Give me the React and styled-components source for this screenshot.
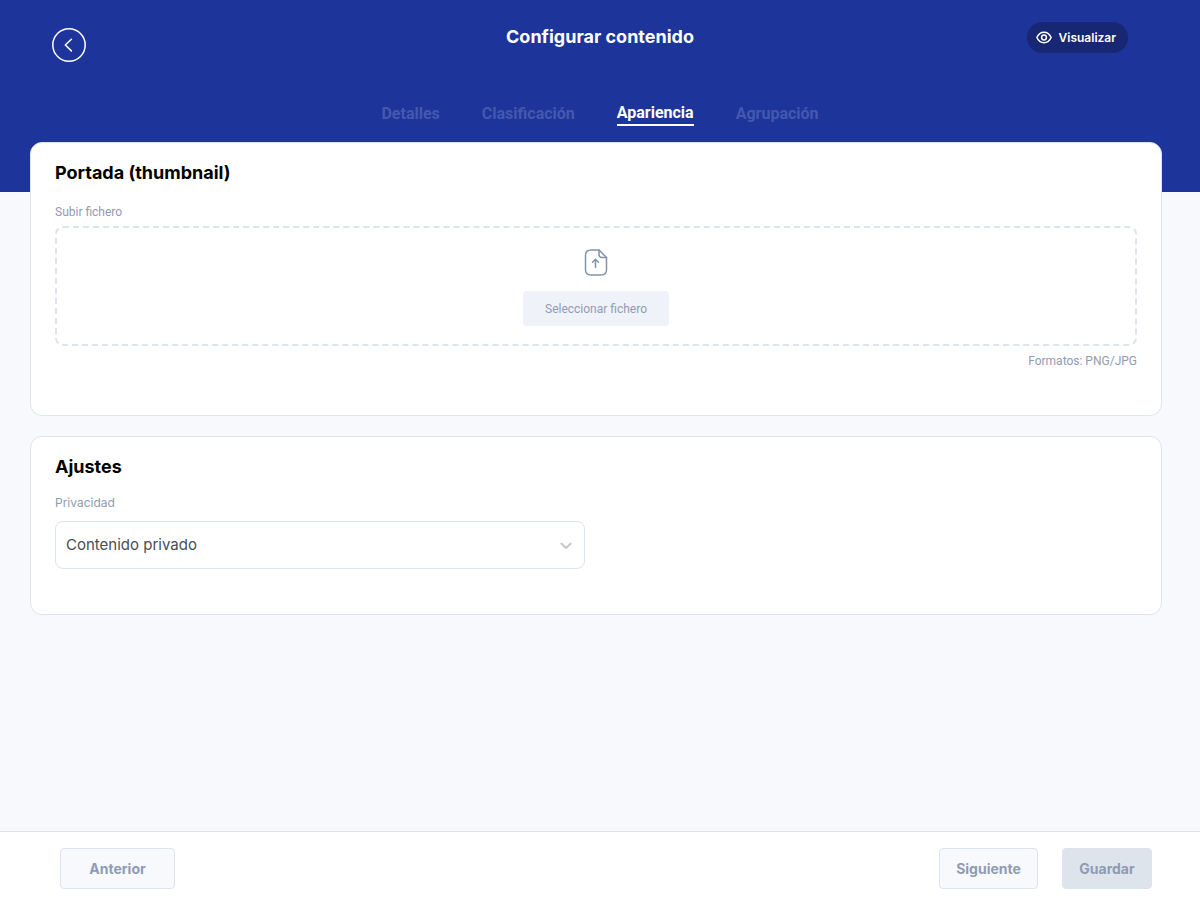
import React, { useState } from "react";
import styled, { createGlobalStyle } from "styled-components";

const TABS = ["Detalles", "Clasificación", "Apariencia", "Agrupación"];

const App = () => {
  const [tab, setTab] = useState("Apariencia");
  const [privacy, setPrivacy] = useState("private");

  return (
    <Page>
      <GlobalStyle />
      <Header>
        <TopBar>
          <BackButton type="button" aria-label="Volver">
            <svg width="34" height="34" viewBox="0 0 34 34" fill="none" stroke="#fff">
              <circle cx="17" cy="17" r="16.2" strokeWidth="1.5" />
              <path d="M19.4 11.3 13.3 17l6.1 5.9" strokeWidth="1.5" strokeLinecap="round" strokeLinejoin="round" />
            </svg>
          </BackButton>
          <Title>Configurar contenido</Title>
          <PreviewButton type="button">
            <svg width="16" height="16" viewBox="0 0 16 16" fill="none" stroke="#fff" strokeWidth="1.5">
              <path d="M.9 7.500C2.300 4.200 4.900 2.300 8 2.300S13.700 4.200 15.100 7.500C13.700 10.800 11.100 12.700 8 12.700S2.300 10.800.9 7.500Z" strokeLinejoin="round" />
              <circle cx="8" cy="7.5" r="2.4" />
            </svg>
            Visualizar
          </PreviewButton>
        </TopBar>
        <Tabs>
          {TABS.map((name) => (
            <Tab key={name} type="button" $active={name === tab} onClick={() => setTab(name)}>
              {name}
            </Tab>
          ))}
        </Tabs>
      </Header>

      <Content>
        <Card>
          <CardTitle>Portada (thumbnail)</CardTitle>
          <UploadLabel htmlFor="thumbnail">Subir fichero</UploadLabel>
          <DropZone>
            <svg width="24" height="28" viewBox="0 0 24 28" fill="none" stroke="#8593ad" strokeWidth="1.5" strokeLinecap="round" strokeLinejoin="round">
              <path d="M15 2H7Q1.5 2 1.5 7.5V21.500Q1.500 27 7 27H17Q22.500 27 22.500 21.500V9.500Z" />
              <path d="M15 2V6.500Q15 9.500 18 9.500H22.500" />
              <path d="M11.500 19.500V11.500M8.500 14.200 11.500 11.200 14.500 14.200" />
            </svg>
            <SelectFile id="thumbnail" type="button">Seleccionar fichero</SelectFile>
          </DropZone>
          <Hint>Formatos: PNG/JPG</Hint>
        </Card>

        <Card>
          <CardTitle>Ajustes</CardTitle>
          <FieldLabel htmlFor="privacy">Privacidad</FieldLabel>
          <SelectBox>
            <Select id="privacy" value={privacy} onChange={(e) => setPrivacy(e.target.value)}>
              <option value="private">Contenido privado</option>
              <option value="public">Contenido público</option>
            </Select>
            <Chevron width="12" height="8" viewBox="0 0 12 8" fill="none" stroke="#c8c8c8" strokeWidth="2">
              <path d="M1.3 1.6 6 6 10.700 1.600" strokeLinecap="round" strokeLinejoin="round" />
            </Chevron>
          </SelectBox>
        </Card>
      </Content>

      <Footer>
        <Button type="button" $width="115px">Anterior</Button>
        <Actions>
          <Button type="button" $width="99px">Siguiente</Button>
          <Button type="button" $width="90px" $filled>Guardar</Button>
        </Actions>
      </Footer>
    </Page>
  );
};

export default App;

const GlobalStyle = createGlobalStyle`
  * {
    box-sizing: border-box;
  }
  body {
    margin: 0;
    font-family: Inter, sans-serif;
    background-color: #f7f9fd;
  }
  button, select {
    font-family: inherit;
    cursor: pointer;
  }
  svg {
    display: block;
    flex-shrink: 0;
  }
`;

const Page = styled.div`
  display: flex;
  flex-direction: column;
  min-height: 100vh;
`;

const Header = styled.header`
  background-color: #1d359b;
  padding: 22px 52px 66px;
`;

const TopBar = styled.div`
  display: grid;
  grid-template-columns: 1fr auto 1fr;
  align-items: start;
  padding-bottom: 38px;
`;

const BackButton = styled.button`
  justify-self: start;
  margin-top: 6px;
  padding: 0;
  border: none;
  background: none;
`;

const Title = styled.h1`
  margin: 4px 0 0;
  font-size: 18px;
  line-height: 22px;
  font-weight: 700;
  color: white;
`;

const PreviewButton = styled.button`
  justify-self: end;
  display: flex;
  align-items: center;
  gap: 7px;
  height: 31px;
  margin-right: 20px;
  padding: 0 12px 0 9px;
  border: none;
  border-radius: 16px;
  background-color: #172774;
  color: white;
  font-size: 12px;
  font-weight: 600;
`;

const Tabs = styled.nav`
  display: flex;
  justify-content: center;
  gap: 42px;
`;

const Tab = styled.button`
  height: 26px;
  padding: ${(props) => (props.$active ? "0" : "2px 0 0")};
  border: none;
  border-bottom: 2px solid ${(props) => (props.$active ? "white" : "transparent")};
  background: none;
  font-family: Roboto, sans-serif;
  font-size: 16px;
  font-weight: 700;
  color: ${(props) => (props.$active ? "white" : "#4459ae")};
`;

const Content = styled.main`
  flex: 1;
  display: flex;
  flex-direction: column;
  gap: 20px;
  margin: -50px 38px 20px 30px;
`;

const Card = styled.section`
  padding: 18px 24px 45px;
  border: 1px solid #dee4ec;
  border-radius: 12px;
  background-color: white;
`;

const CardTitle = styled.h2`
  margin: 0;
  font-size: 18px;
  line-height: 24px;
  font-weight: 700;
  color: black;
`;

const FieldLabel = styled.label`
  display: block;
  margin: 16px 0 10px;
  font-size: 12px;
  line-height: 16px;
  color: #8f9bb3;
`;

const UploadLabel = styled(FieldLabel)`
  margin: 19px 0 6px;
  font-family: Roboto, sans-serif;
`;

const DropZone = styled.div`
  display: flex;
  flex-direction: column;
  align-items: center;
  gap: 15px;
  padding: 20px 0 18px;
  border: 2px dashed #dee4ec;
  border-radius: 8px;
`;

const SelectFile = styled.button`
  height: 35px;
  padding: 0 22px;
  border: none;
  border-radius: 4px;
  background-color: #eff3f9;
  font-family: Roboto, sans-serif;
  font-size: 12px;
  color: #8f9bb3;
`;

const Hint = styled.p`
  margin: 7px 0 1px;
  font-family: Roboto, sans-serif;
  font-size: 12px;
  line-height: 16px;
  text-align: right;
  color: #8f9bb3;
`;

const SelectBox = styled.div`
  position: relative;
  width: 49%;
`;

const Select = styled.select`
  display: block;
  width: 100%;
  height: 48px;
  padding: 0 40px 2px 10px;
  border: 1px solid #dee4ec;
  border-radius: 8px;
  background-color: white;
  appearance: none;
  font-size: 15px;
  color: #484c58;
`;

const Chevron = styled.svg`
  position: absolute;
  top: 21px;
  right: 13px;
  pointer-events: none;
`;

const Footer = styled.footer`
  position: sticky;
  bottom: 0;
  display: flex;
  justify-content: space-between;
  padding: 16px 48px 15px 60px;
  border-top: 1px solid #dee6f0;
  background-color: white;
`;

const Actions = styled.div`
  display: flex;
  gap: 24px;
`;

const Button = styled.button`
  height: 41px;
  min-width: ${(props) => props.$width};
  padding: 0 12px;
  border: 1px solid #dee4ec;
  border-radius: 4px;
  background-color: ${(props) => (props.$filled ? "#dee4ec" : "#f7f9fd")};
  font-size: 14px;
  font-weight: 700;
  color: #8f9bb3;
`;
